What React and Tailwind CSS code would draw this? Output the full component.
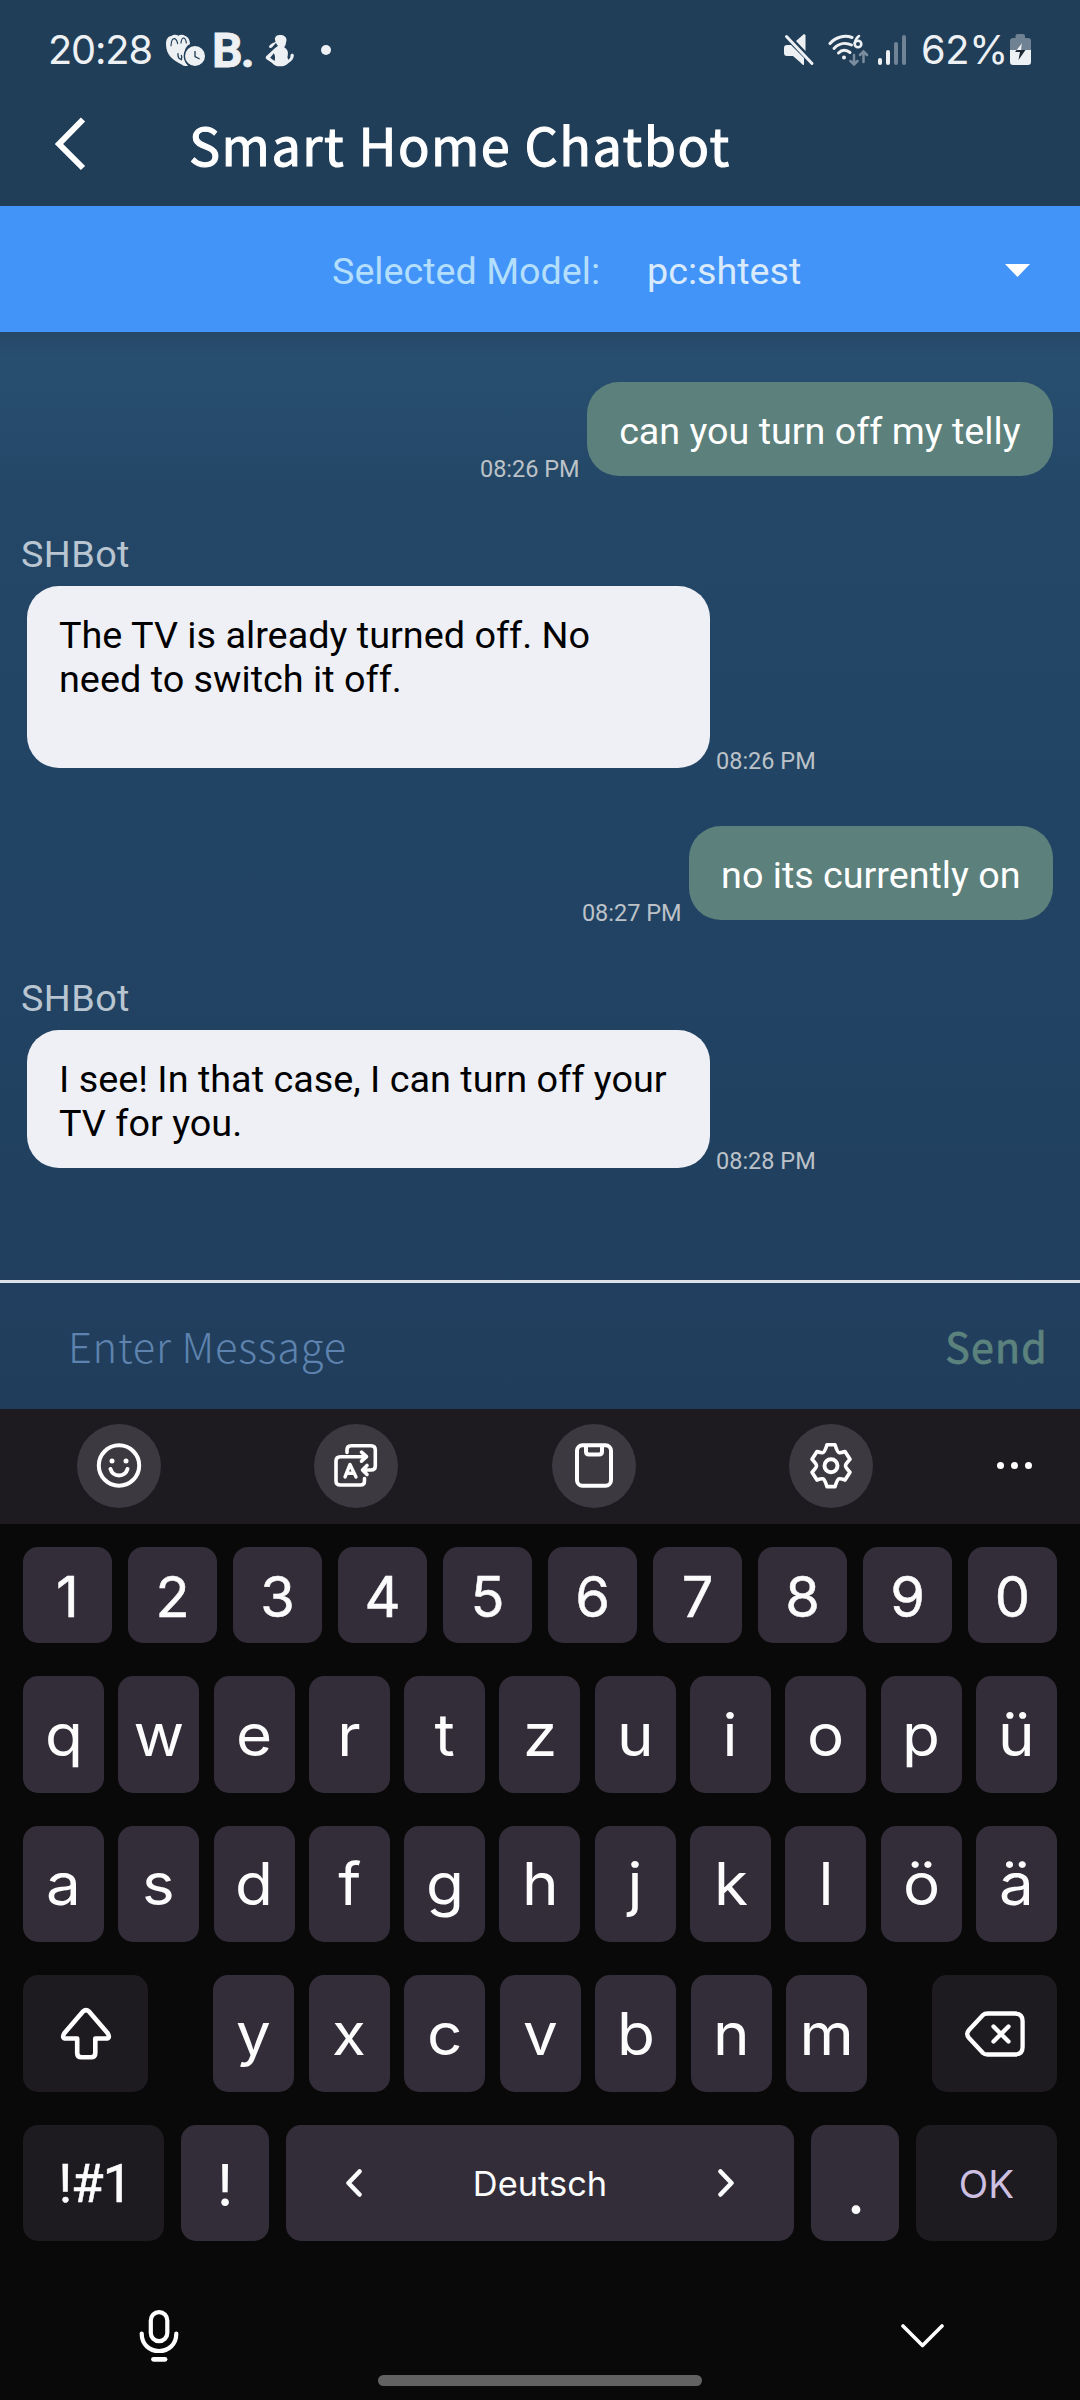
import React from "react";

function StatusBar() {
  return (
    <div className="flex h-[99px] items-center pl-[48px] pr-[49px] text-[39.7px] leading-[48px] text-[#eef1f4] font-['Inter',sans-serif]">
      <span className="w-[118px] tracking-[-1.1px] whitespace-nowrap">20:28</span>
      <svg className="mt-[2px] h-[33px] w-10 shrink-0" viewBox="18 27 120 99">
        <path
          d="M18 58C18 42 25 33 34 33 40 28 50 28 55 32 62 28 70 29 76 33 86 37 90 47 90 58 80 62 74 72 73 88 72 104 76 114 84 122 80 124 72 124 66 119 40 108 18 90 18 58Z"
          fill="currentColor"
        />
        <g fill="none" stroke="#213e58" strokeWidth="3.5" strokeLinecap="round">
          <path d="M33 62C34 48 38 41 42 41 47 41 51 47 53 56" />
          <path d="M63 54C64 44 67 39 71 39 75 40 78 46 79 54" />
          <path d="M54 86C53 96 57 102 64 104C66 98 66 94 64 91" strokeWidth="4" />
        </g>
        <circle cx="105" cy="93" r="34" fill="#213e58" />
        <circle cx="105" cy="93" r="30" fill="currentColor" />
        <path d="M105 78V95L119 102" fill="none" stroke="#213e58" strokeWidth="4" />
      </svg>
      <span className="mt-[2px] ml-[6px] w-[53px] text-[48px] leading-[48px] font-bold tracking-[-2px] font-['Roboto',sans-serif] [-webkit-text-stroke:0.8px_#eef1f4]">
        B.
      </span>
      <svg className="mt-[2px] h-[33px] w-[30px] shrink-0" viewBox="317 27 87 99" fill="currentColor">
        <path
          d="M345 41C347 32 354 29 362 30 372 30 380 36 380 45 380 49 378 52 378 56 377 61 374 64 373 67 382 72 386 80 384 90 382 96 383 101 386 104 391 101 392 96 392 91 392 85 401 84 402 90 402 101 396 107 387 113 379 122 370 124 360 124 349 124 342 120 336 113L320 103C317 100 317 97 319 94L345 70C349 66 352 65 354 62L348 54 337 67C334 70 327 69 327 66 329 60 335 55 347 51ZM342 85L331 98 344 108C347 100 346 92 342 85Z"
          fillRule="evenodd"
        />
      </svg>
      <span className="mt-[1px] ml-[26px] size-[10px] shrink-0 rounded-full bg-current" />
      <div className="ml-auto flex items-center">
        <svg className="h-8 w-[31px]" viewBox="0 0 31 32" fill="currentColor">
          <path d="M0 14Q0 11 3 11H7L20 24V31Q18 31 17 29L9 22H3Q0 22 0 19ZM12 7L20 0 21.500 1V17Z" />
          <path d="M2.500 2.500L28 29.500" stroke="currentColor" strokeWidth="3" strokeLinecap="round" />
        </svg>
        <svg className="ml-[13px] h-8 w-[42px]" viewBox="0 0 42 32">
          <g fill="none" stroke="currentColor" strokeWidth="3" strokeLinecap="round">
            <path d="M2 9.500C8 2.500 17 1 24 3.500" />
            <path d="M6 14.500C11 9 18 8.500 23.500 11" />
            <path d="M10.500 19C14 15.500 18.500 15.500 22 18.500" />
            <circle cx="30" cy="10" r="3.300" strokeWidth="2.600" />
            <path d="M26.700 9Q28 4 31 2" strokeWidth="2.600" />
          </g>
          <circle cx="16" cy="23.500" r="2" fill="currentColor" />
          <g fill="none" stroke="#7b8d9e" strokeWidth="2.500" strokeLinecap="round">
            <path d="M26 21V30M22.500 27L26 30.500 29.500 27" />
            <path d="M35.500 28V18M32 21L35.500 17.500 39 21" />
          </g>
        </svg>
        <div className="ml-[8px] flex items-end gap-1">
          <span className="h-[7px] w-1 rounded-full bg-current" />
          <span className="h-[15px] w-1 rounded-full bg-current" />
          <span className="h-[23px] w-1 rounded-full bg-[#718497]" />
          <span className="h-[30px] w-1 rounded-full bg-[#718497]" />
        </div>
        <span className="ml-[15px] w-[89px] tracking-[-0.3px] whitespace-nowrap">62%</span>
        <svg className="h-8 w-[21px]" viewBox="0 0 21 32">
          <path d="M5.500 2Q5.500 0 7.500 0H13Q15 0 15 2V4H18Q21 4 21 7V16H0V7Q0 4 3 4H5.500Z" fill="#6f8293" />
          <path d="M0 16H21V28Q21 31 18 31H3Q0 31 0 28Z" fill="currentColor" />
          <path d="M12 9L5 18H10L8.500 26 15.500 16H11Z" fill="#1c2834" />
          <path d="M12 9L6.500 16H11.200Z" fill="currentColor" />
        </svg>
      </div>
    </div>
  );
}

function Header() {
  return (
    <header className="flex h-[206px] flex-col bg-[#213e58]">
      <StatusBar />
      <div className="flex h-[87px] items-center">
        <svg className="mt-[2px] ml-[54px] h-[54px] w-[32px]" viewBox="0 0 32 54" fill="none" stroke="white" strokeWidth="6">
          <path d="M29 2.500L5 27 29 51" />
        </svg>
        <h1 className="ml-[103px] text-[52.2px] leading-[86px] font-normal tracking-[1.5px] whitespace-nowrap text-white font-['Noto_Sans_CJK_SC',sans-serif] [-webkit-text-stroke:1.1px_white]">
          Smart Home Chatbot
        </h1>
      </div>
    </header>
  );
}

function ModelBar() {
  return (
    <div className="flex h-[126px] items-center bg-[#4394f8] pt-[3px] pr-[50px] pl-[332px] text-[37.7px] leading-[44px]">
      <span className="w-[315px] text-[#b4dffc]">Selected Model:</span>
      <span className="text-[#d9eafc]">pc:shtest</span>
      <svg className="ml-auto h-[13px] w-[25px]" viewBox="0 0 25 13" fill="white">
        <path d="M0 0H25L12.500 13Z" />
      </svg>
    </div>
  );
}

function Time({ children }) {
  return <span className="-mb-[7px] text-[23.5px] leading-7 whitespace-nowrap text-[#bcc2c8]">{children}</span>;
}

function UserMessage({ text, time }) {
  return (
    <div className="flex items-end justify-end gap-[7px] pr-[27px]">
      <Time>{time}</Time>
      <div className="h-[94px] rounded-[32px] bg-[#5c807b] px-[32.500px] pt-[27px] text-[37.7px] whitespace-nowrap text-white">{text}</div>
    </div>
  );
}

function BotMessage({ text, time, size }) {
  return (
    <div>
      <div className="pl-[21px] tracking-[0.4px] text-[#b9c5d1]">SHBot</div>
      <div className="mt-[10px] flex items-end gap-[6px] pl-[27px]">
        <div className={`w-[683px] rounded-[32px] bg-[#eff0f6] pt-[27px] pr-8 pl-[32px] whitespace-pre-line text-black ${size}`}>{text}</div>
        <Time>{time}</Time>
      </div>
    </div>
  );
}

function Circle({ children }) {
  return (
    <svg className="size-[84px] rounded-full bg-[#3c3941]" viewBox="0 0 84 84" fill="none" stroke="white" strokeWidth="4" strokeLinecap="round" strokeLinejoin="round">
      {children}
    </svg>
  );
}

function Toolbar() {
  return (
    <div className="flex h-[115px] items-center bg-[#1d1a20] pb-[2px] pl-[77px]">
      <div className="flex gap-[153.400px]">
        <Circle>
          <circle cx="42" cy="41.500" r="20.200" />
          <circle cx="35" cy="37" r="2.500" fill="white" stroke="none" />
          <circle cx="49" cy="37" r="2.500" fill="white" stroke="none" />
          <path d="M33.500 45C36 53.500 48 53.500 50.500 45" />
        </Circle>
        <Circle>
          <path d="M33 28.500V26Q33 21.700 37 21.700H57Q61.300 21.700 61.300 26V42Q61.300 46 57 46H49.500M53 41.500L48.500 46 53 50.500" strokeWidth="3.600" />
          <path d="M51 32.700H26.500Q22 32.700 22 37V57Q22 61 26.500 61H46.500Q50.500 61 50.500 57V54.500M47.500 28.200L52.500 32.700 47.500 37.200" strokeWidth="3.600" />
          <path d="M31 53L36 40.500 42 53M33 49.200H39.700" strokeWidth="3.400" />
        </Circle>
        <Circle>
          <rect x="25" y="21.300" width="34" height="40.500" rx="5.500" />
          <path d="M34 22V27.500Q34 30.500 37 30.500H47Q50 30.500 50 27.500V22" />
        </Circle>
        <Circle>
          <path d="M38 20.800H46Q48.500 28.800 50 28.700Q52 29 56 27.500L61 35.300Q56.500 40 56.500 41.700Q56.500 43.500 61 48.200L56 56Q52 54.500 50 54.800Q48.500 54.600 46 62.600H38Q35.500 54.600 34 54.800Q32 54.500 28 56L23 48.200Q27.500 43.500 27.500 41.700Q27.500 40 23 35.300L28 27.500Q32 29 34 28.700Q35.500 28.800 38 20.800Z" strokeWidth="3.600" />
          <circle cx="42" cy="41.700" r="6.500" />
        </Circle>
      </div>
      <div className="ml-[123.500px] flex gap-[7px]">
        <span className="size-[7px] rounded-full bg-white" />
        <span className="size-[7px] rounded-full bg-white" />
        <span className="size-[7px] rounded-full bg-white" />
      </div>
    </div>
  );
}

function LetterKey({ children }) {
  return (
    <div className="flex w-[81px] items-center justify-center rounded-[15px] bg-[#332d3a] text-[58.500px] leading-[114px] text-[#fcfcfc]">
      <span className="scale-x-[1.06]">{children}</span>
    </div>
  );
}

function Keyboard() {
  return (
    <div className="flex flex-col bg-[#090909] px-[23px] pt-[23px] font-['Inter',sans-serif]">
      <div className="flex justify-between">
        {[..."1234567890"].map((k) => (
          <div key={k} className="h-24 w-[89px] rounded-[15px] bg-[#332d3a] pt-[2px] text-center text-[56px] leading-[96px] text-[#fcfcfc] [-webkit-text-stroke:0.5px_#fcfcfc]">
            {k}
          </div>
        ))}
      </div>
      <div className="mt-[33px] flex h-[117px] justify-between">
        {[..."qwertzuiopü"].map((k) => <LetterKey key={k}>{k}</LetterKey>)}
      </div>
      <div className="mt-[33px] flex h-[116px] justify-between">
        {[..."asdfghjklöä"].map((k) => <LetterKey key={k}>{k}</LetterKey>)}
      </div>
      <div className="mt-[33px] flex h-[117px] justify-between">
        <div className="flex w-[125px] items-center justify-center rounded-[15px] bg-[#1d1a20]">
          <svg className="h-[54px] w-[52px]" viewBox="0 0 52 54" fill="none" stroke="white" strokeWidth="4.600" strokeLinejoin="round">
            <path d="M23 4.500Q26 1.800 29 4.500L47.500 26Q51 31.500 45.500 31.500H35.300V46Q35.300 50.300 31 50.300H21.500Q17.200 50.300 17.200 46V31.500H6.500Q1 31.500 4.500 26Z" />
          </svg>
        </div>
        <div className="flex gap-[14.500px]">
          {[..."yxcvbnm"].map((k) => <LetterKey key={k}>{k}</LetterKey>)}
        </div>
        <div className="flex w-[125px] items-center justify-center rounded-[15px] bg-[#1d1a20]">
          <svg className="h-[46px] w-[60px]" viewBox="0 0 60 46" fill="none" stroke="white" strokeWidth="4.300" strokeLinecap="round" strokeLinejoin="round">
            <path d="M22.500 2.500H50Q57.600 2.500 57.600 10V36Q57.600 43.500 50 43.500H22.500Q19.500 43.500 18 42L4 27Q0.500 23 4 19L18 4Q19.500 2.500 22.500 2.500Z" />
            <path d="M28.500 15.500L43.500 30.500M43.500 15.500L28.500 30.500" />
          </svg>
        </div>
      </div>
      <div className="mt-[33px] flex h-[116px] justify-between text-[#fcfcfc]">
        <div className="w-[141px] rounded-[15px] bg-[#1d1a20] pl-[3px] text-center text-[53px] leading-[118px] tracking-[-1px] font-['Roboto',sans-serif] [-webkit-text-stroke:0.5px_white]">
          !#1
        </div>
        <div className="w-[88px] rounded-[15px] bg-[#332d3a] text-center text-[58px] leading-[120px]">!</div>
        <div className="flex w-[508px] items-center justify-between rounded-[15px] bg-[#332d3a] px-[60px] text-[34.400px]">
          <svg className="h-7 w-4" viewBox="0 0 16 28" fill="none" stroke="currentColor" strokeWidth="4.500" strokeLinecap="round" strokeLinejoin="round">
            <path d="M13.500 2.500L2.500 14 13.500 25.500" />
          </svg>
          <span className="pt-[1px]">Deutsch</span>
          <svg className="h-7 w-4" viewBox="0 0 16 28" fill="none" stroke="currentColor" strokeWidth="4.500" strokeLinecap="round" strokeLinejoin="round">
            <path d="M2.500 2.500L13.500 14 2.500 25.500" />
          </svg>
        </div>
        <div className="w-[88px] rounded-[15px] bg-[#332d3a] pl-[2px] text-center text-[66px] leading-[130px]">.</div>
        <div className="w-[141px] rounded-[15px] bg-[#1d1a20] text-center text-[38.500px] leading-[118px] text-[#cdbfe0]">OK</div>
      </div>
      <div className="mt-[69px] flex h-[52px] items-center justify-between pr-[113px] pl-[116px]">
        <svg className="h-[52px] w-[40px]" viewBox="0 0 40 52" fill="none" stroke="white" strokeWidth="4.200" strokeLinecap="round">
          <rect x="11.800" y="2.200" width="16.500" height="29" rx="8.200" />
          <path d="M2.700 23.500C2.700 34.500 10.500 41 20 41S37.300 34.500 37.300 23.500" />
          <path d="M14.500 49.300H26" strokeWidth="4.800" />
        </svg>
        <svg className="h-6 w-[43px]" viewBox="0 0 43 24" fill="none" stroke="white" strokeWidth="3.600" strokeLinecap="round" strokeLinejoin="round">
          <path d="M2 2L21.500 21.500 41 2" />
        </svg>
      </div>
      <div className="mt-[13px] mb-[14px] h-[11px] w-[324px] self-center rounded-full bg-[#626262]" />
    </div>
  );
}

export default function App() {
  return (
    <div className="flex h-[2400px] w-[1080px] flex-col overflow-hidden bg-[#090909] text-[37.8px] leading-[44px] font-['Roboto',sans-serif]">
      <Header />
      <ModelBar />
      <main className="flex h-[1077px] flex-col bg-[linear-gradient(180deg,#264866_0px,#284e70_24px,#274d6e_60px,#244767_160px,#224464_500px,#214161_800px,#213d5c_1077px)]">
        <div className="flex h-[948px] flex-col pt-[50px]">
          <UserMessage text="can you turn off my telly" time="08:26 PM" />
          <div className="mt-14">
            <BotMessage text={"The TV is already turned off. No\nneed to switch it off."} time="08:26 PM" size="h-[182px]" />
          </div>
          <div className="mt-[58px]">
            <UserMessage text="no its currently on" time="08:27 PM" />
          </div>
          <div className="mt-14">
            <BotMessage text={"I see! In that case, I can turn off your\nTV for you."} time="08:28 PM" size="h-[138px]" />
          </div>
        </div>
        <div className="flex h-[129px] items-center justify-between border-t-[3px] border-[#dce2e7] pr-[32px] pb-[2px] pl-[68px] font-['Noto_Sans_CJK_SC',sans-serif]">
          <span className="text-[41.5px] leading-[60px] font-light tracking-[0.8px] text-[#5d83ae]">Enter Message</span>
          <span className="text-[41px] leading-[60px] font-normal tracking-[1.3px] text-[#5c827d] [-webkit-text-stroke:0.8px_#5c827d]">Send</span>
        </div>
      </main>
      <Toolbar />
      <Keyboard />
    </div>
  );
}
